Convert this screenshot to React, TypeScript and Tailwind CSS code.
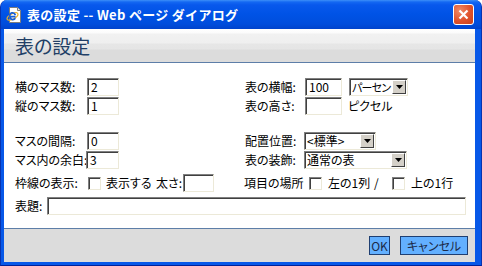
import React from "react";

const sunken =
  "border border-t-[#808080] border-l-[#808080] border-b-[#ece9d8] border-r-[#ece9d8] shadow-[inset_1px_1px_0_#404040] bg-white";

function Box({ w, value }: { w: string; value?: string }) {
  return (
    <div className={`flex h-[18px] shrink-0 items-center pl-[3px] text-[12px] leading-none ${sunken} ${w}`}>
      {value}
    </div>
  );
}

function Drop({ w, value, tight }: { w: string; value: string; tight?: boolean }) {
  return (
    <div className={`flex h-[18px] shrink-0 items-center ${sunken} ${w}`}>
      <span
        className={`min-w-0 flex-1 whitespace-nowrap pl-[2px] leading-none ${
          tight ? "text-[11px] tracking-[-0.8px]" : "text-[12px]"
        }`}
      >
        {value}
      </span>
      <span className="mr-[1px] flex h-[14px] w-[14px] shrink-0 items-center justify-center border border-t-white border-l-white border-b-[#404040] border-r-[#404040] bg-[#d4d0c8]">
        <svg width="7" height="4" viewBox="0 0 7 4">
          <path d="M0 0h7L3.5 4z" fill="#000" />
        </svg>
      </span>
    </div>
  );
}

function Check() {
  return <span className={`block h-[13px] w-[13px] shrink-0 ${sunken}`} />;
}

function Label({ w, children }: { w: string; children: React.ReactNode }) {
  return <span className={`shrink-0 whitespace-nowrap text-[12px] leading-none ${w}`}>{children}</span>;
}

function IeIcon() {
  return (
    <svg width="16" height="16" viewBox="0 0 16 16">
      <path d="M3.5 0.5h8l3 3v12h-11z" fill="#fff" stroke="#7d7d7d" />
      <path d="M11.5 0.5v3h3" fill="#e8e8e8" stroke="#7d7d7d" />
      <ellipse cx="6.5" cy="9.5" rx="6" ry="2.6" transform="rotate(-30 6.5 9.5)" fill="none" stroke="#f0b020" strokeWidth="1.2" />
      <path d="M9.6 9.6H3.8a2.8 2.8 0 1 1 5.4-1.4M9.3 11.2a2.9 2.9 0 0 1-5.2-0.6" fill="none" stroke="#1a5fd6" strokeWidth="1.8" />
    </svg>
  );
}

export default function App() {
  return (
    <div className="h-[266px] w-[482px] bg-white font-['Noto_Sans_CJK_JP','Noto_Sans',sans-serif] text-black [font-feature-settings:'palt']">
      <div className="flex h-full flex-col overflow-hidden rounded-t-[7px] border-x border-b border-x-[#0833b0] border-b-[#00229a] bg-[#0758e8]">
        {/* title bar */}
        <div className="flex h-[29px] shrink-0 items-center justify-between bg-[linear-gradient(to_bottom,#3d8ff8_0px,#1468f2_2px,#0858ec_5px,#0053e6_14px,#004ddc_24px,#0043cc_29px)] pl-[5px] pr-[7px]">
          <div className="flex items-center gap-[5px]">
            <IeIcon />
            <span className="text-[13px] font-bold leading-none tracking-[0.3px] text-white [font-feature-settings:normal]">
              表の設定 -- Web ページ ダイアログ
            </span>
          </div>
          <div className="flex h-[21px] w-[21px] items-center justify-center rounded-[3px] border border-white bg-[radial-gradient(circle_at_30%_30%,#f08a66,#e0522c_55%,#c8401c)]">
            <svg width="11" height="11" viewBox="0 0 11 11">
              <path d="M1.5 1.5l8 8M9.5 1.5l-8 8" stroke="#fff" strokeWidth="2.2" />
            </svg>
          </div>
        </div>

        <div className="flex flex-1 flex-col pl-[3px] pr-[6px] pb-[3px]">
          {/* header */}
          <div className="flex h-[34px] shrink-0 items-center border-b border-[#5d7ea8] bg-[linear-gradient(to_bottom,#ffffff_0px,#fbfbfb_4px,#f1f1f1_5px,#efefef_14px,#e6e6e6_15px,#e5e5e5_20px,#dcdcdc_21px)] pl-[11px]">
            <span className="text-[19px] leading-none text-[#223f66]">表の設定</span>
          </div>

          {/* content */}
          <div className="flex h-[165px] shrink-0 flex-col bg-white pl-[11px] pr-[9px] pt-[15px]">
            <div className="flex h-[18px] items-center">
              <div className="flex w-[230px] items-center">
                <Label w="w-[72px]">横のマス数:</Label>
                <Box w="w-[32px]" value="2" />
              </div>
              <Label w="w-[60px]">表の横幅:</Label>
              <Box w="w-[37px]" value="100" />
              <div className="ml-[7px]">
                <Drop w="w-[59px]" value="パーセン" tight />
              </div>
            </div>

            <div className="mt-[1px] flex h-[18px] items-center">
              <div className="flex w-[230px] items-center">
                <Label w="w-[72px]">縦のマス数:</Label>
                <Box w="w-[32px]" value="1" />
              </div>
              <Label w="w-[60px]">表の高さ:</Label>
              <Box w="w-[37px]" />
              <span className="ml-[6px] text-[12px] leading-none">ピクセル</span>
            </div>

            <div className="mt-[17px] flex h-[18px] items-center">
              <div className="flex w-[230px] items-center">
                <Label w="w-[72px]">マスの間隔:</Label>
                <Box w="w-[32px]" value="0" />
              </div>
              <Label w="w-[59px]">配置位置:</Label>
              <Drop w="w-[72px]" value="<標準>" />
            </div>

            <div className="mt-[1px] flex h-[18px] items-center">
              <div className="flex w-[230px] items-center">
                <Label w="w-[71px]">マス内の余白:</Label>
                <Box w="w-[33px]" value="3" />
              </div>
              <Label w="w-[59px]">表の装飾:</Label>
              <Drop w="w-[103px]" value="通常の表" />
            </div>

            <div className="mt-[5px] flex h-[18px] items-center">
              <div className="flex w-[229px] items-center">
                <Label w="w-[73px]">枠線の表示:</Label>
                <Check />
                <Label w="w-[50px] ml-[5px]">表示する</Label>
                <Label w="mr-[1px]">太さ:</Label>
                <Box w="w-[31px]" value="" />
              </div>
              <Label w="w-[65px]">項目の場所</Label>
              <Check />
              <Label w="w-[46px] ml-[6px]">左の1列</Label>
              <Label w="w-[18px]">/</Label>
              <Check />
              <Label w="ml-[6px]">上の1行</Label>
            </div>

            <div className="mt-[5px] flex h-[18px] items-center">
              <Label w="w-[32px]">表題:</Label>
              <div className={`h-[18px] flex-1 ${sunken}`} />
            </div>
          </div>

          {/* footer */}
          <div className="flex flex-1 items-start justify-end gap-[10px] border-t border-[#5d7ea8] bg-[#dcdcdc] pr-[7px] pt-[7px]">
            <div className="flex h-[19px] w-[21px] items-center justify-center border border-[#1f3f72] bg-[#63b0ff] text-[12px] leading-none text-[#1b2a48]">
              OK
            </div>
            <div className="flex h-[19px] w-[68px] items-center justify-center border border-[#1f3f72] bg-[#63b0ff] text-[12px] leading-none text-[#1b2a48]">
              キャンセル
            </div>
          </div>
        </div>
      </div>
    </div>
  );
}
